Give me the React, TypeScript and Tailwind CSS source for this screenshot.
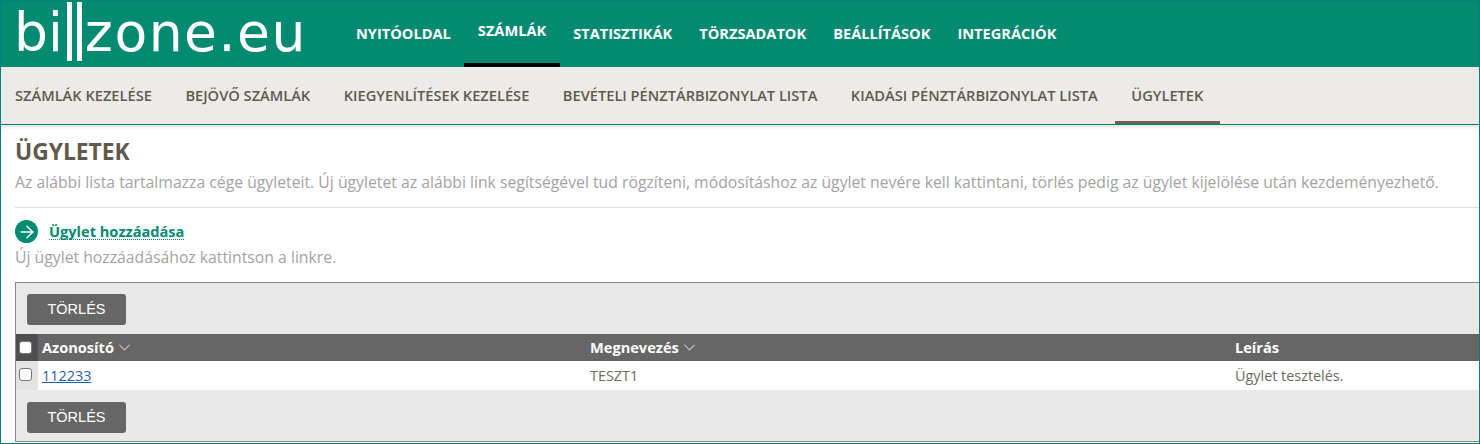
import React from 'react';
import { ArrowRight, ChevronDown } from 'lucide-react';

const mainItems = ['NYITÓOLDAL', 'SZÁMLÁK', 'STATISZTIKÁK', 'TÖRZSADATOK', 'BEÁLLÍTÁSOK', 'INTEGRÁCIÓK'];
const subItems = [
  'SZÁMLÁK KEZELÉSE',
  'BEJÖVŐ SZÁMLÁK',
  'KIEGYENLÍTÉSEK KEZELÉSE',
  'BEVÉTELI PÉNZTÁRBIZONYLAT LISTA',
  'KIADÁSI PÉNZTÁRBIZONYLAT LISTA',
  'ÜGYLETEK',
];

const Logo = () => (
  <div className="flex h-[66px] w-[341.5px] shrink-0 items-start pl-[13px] font-['DejaVu_Sans',sans-serif] text-[53.5px] leading-[64px] font-normal text-white">
    <span>bi</span>
    <span className="mt-[1px] ml-[4px] h-[59px] w-[5px] bg-white" />
    <span className="mt-[1px] ml-[5px] h-[59px] w-[5px] bg-white" />
    <span className="ml-[3px] tracking-[1.5px]">zone.eu</span>
  </div>
);

const DeleteButton = () => (
  <button className="h-[31px] w-[99px] rounded-[3px] bg-[#666666] font-['Liberation_Sans',sans-serif] text-[14.5px] text-white">
    TÖRLÉS
  </button>
);

const SortLabel = ({ label }: { label: string }) => (
  <span className="flex items-center gap-[1px]">
    {label}
    <ChevronDown size={19} strokeWidth={1.4} className="text-[#c4c4c4]" />
  </span>
);

export default function App() {
  return (
    <div className="h-[444px] w-[1480px] overflow-hidden border border-[#04807a] bg-white font-['Open_Sans',sans-serif] text-[14.6px]">
      <header className="flex h-[66px] bg-[#048a70]">
        <Logo />
        <nav className="flex items-stretch font-bold text-white">
          {mainItems.map((item, i) => (
            <a
              key={item}
              className={
                i === 1
                  ? 'flex items-center border-b-4 border-black px-[13.5px] pt-[1px] pb-[3px]'
                  : 'flex items-center px-[13.5px] pb-[1px]'
              }
            >
              {item}
            </a>
          ))}
        </nav>
      </header>

      <div className="flex h-[58px] items-stretch border-b border-[#04806a] bg-[#ecebe9] text-[14.65px] font-semibold text-[#5f5b4c] shadow-[0_2px_4px_rgba(0,0,0,0.12)]">
        {subItems.map((item, i) => (
          <a
            key={item}
            className={
              i === 5
                ? 'flex items-center border-b-[3px] border-[#666350] px-[16.75px] pt-[3px]'
                : i === 0
                  ? 'flex items-center pr-[16.75px] pl-[14px]'
                  : 'flex items-center px-[16.75px]'
            }
          >
            {item}
          </a>
        ))}
      </div>

      <main className="pl-[14px]">
        <h1 className="mt-[10px] text-[22.8px] leading-[33px] font-bold text-[#5f5b4c]">ÜGYLETEK</h1>
        <p className="mt-[4px] text-[15.75px] leading-[20px] text-[#a3a3a3]">
          Az alábbi lista tartalmazza cége ügyleteit. Új ügyletet az alábbi link segítségével tud rögzíteni, módosításhoz az ügylet nevére kell kattintani, törlés pedig az ügylet kijelölése után kezdeményezhető.
        </p>
        <hr className="mt-[15px] border-[#dddddd]" />

        <div className="mt-[12px] flex items-center gap-[11px]">
          <span className="flex h-[23px] w-[23px] items-center justify-center rounded-full bg-[#048a70] text-white">
            <ArrowRight size={20} strokeWidth={1.8} />
          </span>
          <a className="border-b border-dotted border-[#048a70] text-[14.6px] leading-[16px] font-bold text-[#048a70]">
            Ügylet hozzáadása
          </a>
        </div>
        <p className="mt-[4px] text-[15.75px] leading-[20px] text-[#a3a3a3]">Új ügylet hozzáadásához kattintson a linkre.</p>

        <section className="mt-[15px] h-[160px] border border-r-0 border-[#888888] bg-[#e9e9e9]">
          <div className="px-[11px] pt-[11px] pb-[9px]">
            <DeleteButton />
          </div>
          <div className="grid h-[27px] grid-cols-[22px_552px_645px_1fr] items-center bg-[#666666] font-bold text-white">
            <div className="flex h-full items-center bg-[#4f4f4f] pl-[3px]">
              <span className="h-[13px] w-[13px] rounded-[3px] border border-[#767676] bg-white" />
            </div>
            <div className="pl-[4px]">
              <SortLabel label="Azonosító" />
            </div>
            <SortLabel label="Megnevezés" />
            <span>Leírás</span>
          </div>
          <div className="grid h-[29px] grid-cols-[22px_552px_645px_1fr] items-center bg-white pt-[1px] text-[14.4px] text-[#6b6b5f]">
            <div className="-mt-[1px] flex h-[29px] items-center bg-[#e3e3e3] pl-[3px]">
              <span className="mb-[2px] h-[13px] w-[13px] rounded-[3px] border border-[#767676] bg-white" />
            </div>
            <a className="pl-[4px] text-[#1f5fa8] underline">112233</a>
            <span>TESZT1</span>
            <span>Ügylet tesztelés.</span>
          </div>
          <div className="px-[11px] pt-[12px]">
            <DeleteButton />
          </div>
        </section>
      </main>
    </div>
  );
}
